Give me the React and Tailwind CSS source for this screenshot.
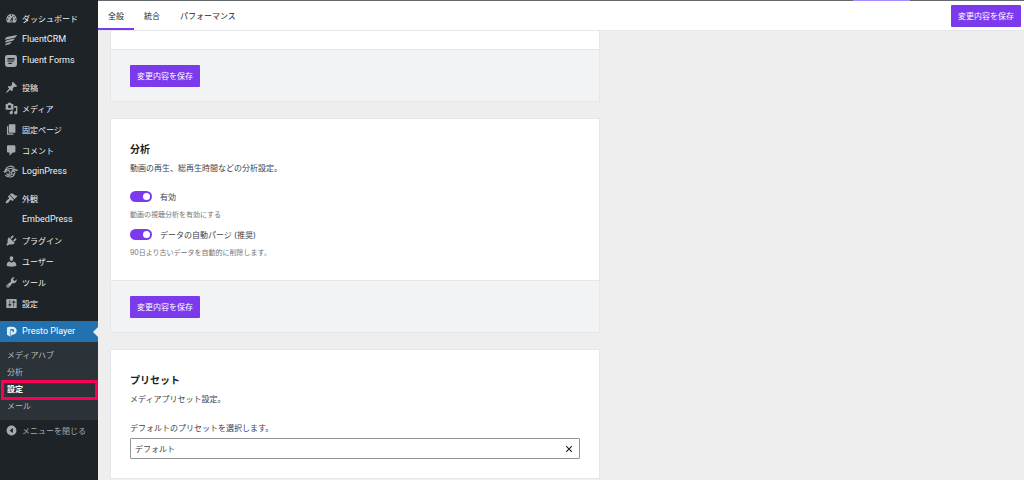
import React, { useState } from "react";

const paths = {
  dashboard:
    "M3.76 16h12.48A7.998 7.998 0 0 0 10 3a7.998 7.998 0 0 0-6.24 13zM10 4c.55 0 1 .45 1 1s-.45 1-1 1-1-.45-1-1 .45-1 1-1zM6 6c.55 0 1 .45 1 1s-.45 1-1 1-1-.45-1-1 .45-1 1-1zm8 0c.55 0 1 .45 1 1s-.45 1-1 1-1-.45-1-1 .45-1 1-1zm-5.37 5.55L12 7v6c0 1.1-.9 2-2 2s-2-.9-2-2c0-.57.24-1.08.63-1.45zM4 10c.55 0 1 .45 1 1s-.45 1-1 1-1-.45-1-1 .45-1 1-1zm12 0c.55 0 1 .45 1 1s-.45 1-1 1-1-.45-1-1 .45-1 1-1zm-5 3c0-.55-.45-1-1-1s-1 .45-1 1 .45 1 1 1 1-.45 1-1z",
  crm: "M0 8.500C1 5.500 3.500 4.500 7 4L20 1.500C19 5 16.500 6.200 14 6.700L4 8.600C2.500 8.800 1 9 0 9.500zM0 14C1 11 3 10 6 9.400L16 7.400C15 10.600 12.500 11.600 10 12L4 13.200C2.500 13.400 1 13.700 0 14.500zM0 19C1 16 3 15 5 14.600L11 13.400C10 16.200 8 17 6 17.400C4 17.800 2 18 0 19z",
  forms:
    "M4 0h12a4 4 0 0 1 4 4v12a4 4 0 0 1-4 4H4a4 4 0 0 1-4-4V4a4 4 0 0 1 4-4zM4 5v2.500h12V5zM4 9v2h10.500l1.500-2zM5.500 13v2h5.500l1.500-2z",
  post: "M10.44 3.02l1.82-1.82 6.36 6.35-1.83 1.82c-1.05-.68-2.48-.57-3.41.36l-.75.75c-.92.93-1.04 2.35-.35 3.41l-1.83 1.82-2.41-2.41-2.8 2.79c-.42.42-3.38 2.71-3.8 2.29s1.86-3.39 2.28-3.81l2.79-2.79L4.1 9.36l1.83-1.82c1.05.69 2.48.57 3.4-.36l.75-.75c.93-.92 1.05-2.35.36-3.41z",
  media:
    "M13 11V4c0-.55-.45-1-1-1h-1.670L9 1H5L3.670 3H2c-.55 0-1 .45-1 1v7c0 .55.45 1 1 1h10c.55 0 1-.45 1-1zM7 4.500c1.380 0 2.500 1.120 2.500 2.500S8.380 9.500 7 9.500 4.500 8.380 4.500 7 5.620 4.500 7 4.500zM14 6h5v10.500c0 1.380-1.120 2.500-2.500 2.500S14 17.880 14 16.500s1.120-2.500 2.500-2.500c.17 0 .34.02.5.05V9h-3V6zm-4 8.050V13h2v3.500c0 1.380-1.120 2.500-2.500 2.500S7 17.880 7 16.500 8.120 14 9.500 14c.17 0 .34.02.5.05z",
  page: "M6 15V2h10v13H6zm-1 1h8v2H3V5h2v11z",
  comment:
    "M5 2h9c1.1 0 2 .9 2 2v7c0 1.1-.9 2-2 2h-2l-5 5v-5H5c-1.1 0-2-.9-2-2V4c0-1.1.9-2 2-2z",
  appearance:
    "M14.48 11.06L7.41 3.99l1.5-1.5c.5-.56 2.3-.47 3.51.32 1.21.8 1.43 1.28 2.91 2.1 1.18.64 2.45 1.26 4.45.85zm-.71.71L6.7 4.7 4.93 6.47c-.39.39-.39 1.02 0 1.41l1.06 1.06c.39.39.39 1.03 0 1.42-.6.6-1.43 1.11-2.21 1.69-.35.26-.7.53-1.01.84C1.43 14.23.4 16.08 1.4 17.07c.99 1 2.84-.03 4.18-1.36.31-.31.58-.66.85-1.02.57-.78 1.08-1.61 1.69-2.21.39-.39 1.02-.39 1.41 0l1.06 1.06c.39.39 1.02.39 1.41 0z",
  plugins:
    "M13.11 4.36L9.87 7.6 8 5.73l3.24-3.24c.35-.34 1.05-.2 1.56.32.52.51.66 1.21.31 1.55zm-8 1.77l.91-1.12 9.01 9.01-1.19.84c-.71.71-2.63 1.16-3.82 1.16H6.14L4.9 17.26c-.59.59-1.54.59-2.12 0-.59-.58-.59-1.53 0-2.12L4 13.88v-3.850c0-1.180.4-3.190 1.110-3.900zm7.260 3.970l3.240-3.240c.34-.35 1.040-.21 1.550.31.52.51.66 1.210.31 1.550l-3.240 3.250z",
  users:
    "M10 9.25c-2.27 0-2.73-3.44-2.73-3.44C7 4.02 7.82 2 9.97 2c2.16 0 2.98 2.02 2.71 3.81 0 0-.41 3.44-2.68 3.44zm0 2.57L12.72 10c2.39 0 4.52 2.33 4.52 4.53v2.49s-3.65 1.13-7.24 1.13c-3.65 0-7.24-1.13-7.24-1.13v-2.49c0-2.25 1.94-4.48 4.47-4.48z",
  tools:
    "M16.68 9.77c-1.34 1.34-3.3 1.67-4.95.99l-5.41 6.52c-.99.99-2.59.99-3.58 0s-.99-2.59 0-3.57l6.52-5.42c-.68-1.65-.35-3.61.99-4.95 1.28-1.28 3.12-1.62 4.72-1.06l-2.89 2.89 2.82 2.82 2.86-2.87c.53 1.58.18 3.39-1.08 4.65zM3.81 16.21c.4.39 1.04.39 1.43 0 .4-.4.4-1.04 0-1.43-.39-.4-1.03-.4-1.43 0-.39.39-.39 1.03 0 1.43z",
  settings:
    "M18 16V4c0-.55-.45-1-1-1H3c-.55 0-1 .45-1 1v12c0 .55.45 1 1 1h14c.55 0 1-.45 1-1zM8 11h1c.55 0 1 .45 1 1s-.45 1-1 1H8v1.5c0 .28-.22.5-.5.5s-.5-.22-.5-.5V13H6c-.55 0-1-.45-1-1s.45-1 1-1h1V5.5c0-.28.22-.5.5-.5s.5.22.5.5V11zm5-2h-1c-.55 0-1-.45-1-1s.45-1 1-1h1V5.5c0-.28.22-.5.5-.5s.5.22.5.5V7h1c.55 0 1 .45 1 1s-.45 1-1 1h-1v5.5c0 .28-.22.5-.5.5s-.5-.22-.5-.5V9z",
  presto:
    "M3 4C5 2.500 8 2.500 11 2.500C15.500 2.500 18 5.500 18 9C18 12.500 15.500 15 12 15H10.500L8.500 18.500V7.500L12.500 9.500L10.500 11.500C12.500 11.500 14 11 14 9C14 7 12.500 6.200 11 6.200C8.500 6.200 7.500 7 7.500 9V17.500L3 15z",
  collapse:
    "M10 1a9 9 0 1 0 0 18 9 9 0 0 0 0-18zM12.500 5.500v9L6.500 10z",
};

function Icon({ name }) {
  if (name === "login") {
    return (
      <svg viewBox="0 0 24 20" className="h-[13px] w-4 shrink-0" fill="none" stroke="currentColor" strokeWidth="1.6" aria-hidden="true">
        <path d="M3 7.500C6 1 14 0 17 4.500M1 10.500C6 5 14 4 22.500 8.500C18 7 14 7.500 12.500 10M2 12C5 7.500 10 8 10.500 11C11 14.500 6.500 15.500 5 13M3 15.500C7 19.500 15 19.500 17.500 14.500M12.500 11.500C14 8.500 18.500 9 18 12C17.500 15 12.500 15.500 12.500 11.500M6 17C10 16.500 11 15 13 14.500" />
      </svg>
    );
  }
  const large = name === "crm" || name === "forms";
  return (
    <svg viewBox="0 0 20 20" className={large ? "size-3 shrink-0" : "size-[13px] shrink-0"} fill="currentColor" fillRule="evenodd" aria-hidden="true">
      {name && <path d={paths[name]} />}
    </svg>
  );
}

const groups = [
  [
    ["dashboard", "ダッシュボード"],
    ["crm", "FluentCRM"],
    ["forms", "Fluent Forms"],
  ],
  [
    ["post", "投稿"],
    ["media", "メディア"],
    ["page", "固定ページ"],
    ["comment", "コメント"],
    ["login", "LoginPress"],
  ],
  [
    ["appearance", "外観"],
    ["", "EmbedPress"],
    ["plugins", "プラグイン"],
    ["users", "ユーザー"],
    ["tools", "ツール"],
    ["settings", "設定"],
  ],
];

function MenuLink({ icon, label }) {
  const latin = /^[A-Z]/.test(label);
  return (
    <a href="#" className="flex h-[21px] items-center text-[#f0f0f1]">
      <span className="flex w-[22px] shrink-0 justify-center text-[#a7aaad]">
        <Icon name={icon} />
      </span>
      <span className={latin ? "whitespace-nowrap font-[Roboto,sans-serif] text-[9px]" : "whitespace-nowrap text-[8px]"}>{label}</span>
    </a>
  );
}

function Sidebar() {
  return (
    <nav className="flex w-[98px] shrink-0 flex-col bg-[#1d2327] pt-2">
      <div className="flex flex-col gap-[6px]">
        {groups.map((items, i) => (
          <div key={i}>
            {items.map(([icon, label]) => (
              <MenuLink key={label} icon={icon} label={label} />
            ))}
          </div>
        ))}
      </div>
      <a href="#" className="relative mt-[7px] flex h-[21px] items-center bg-[#2271b1] font-[Roboto,sans-serif] text-[9px] text-white">
        <span className="flex w-[22px] justify-center text-[#e4edf5]">
          <Icon name="presto" />
        </span>
        Presto Player
        <span className="absolute right-0 top-1/2 size-0 -translate-y-1/2 border-y-5 border-r-5 border-y-transparent border-r-[#eeeeee]" />
      </a>
      <div className="flex flex-col bg-[#2c3338] pb-[6px] pt-1 text-[8px] text-[#b8bbbe]">
        <a href="#" className="flex h-[17px] items-center px-[7px]">メディアハブ</a>
        <a href="#" className="flex h-[17px] items-center px-[7px]">分析</a>
        <a href="#" aria-current="page" className="relative flex h-[17px] items-center px-[7px] font-bold text-white">
          設定
          <span className="absolute -bottom-[3px] left-px right-0 top-0 border-3 border-[#fb0054]" />
        </a>
        <a href="#" className="flex h-[17px] items-center px-[7px]">メール</a>
      </div>
      <button type="button" className="flex h-[21px] items-center text-[8px] text-[#a7aaad]">
        <span className="flex w-[22px] justify-center">
          <svg viewBox="0 0 20 20" className="size-[11px]" fill="currentColor" fillRule="evenodd" aria-hidden="true">
            <path d={paths.collapse} />
          </svg>
        </span>
        メニューを閉じる
      </button>
    </nav>
  );
}

function SaveButton() {
  return (
    <button type="button" className="h-[22px] whitespace-nowrap rounded-[1px] bg-[#7c3aed] px-[7px] text-[8px] text-white">
      変更内容を保存
    </button>
  );
}

function Toggle({ id, label, help }) {
  const [on, setOn] = useState(true);
  return (
    <div>
      <div className="flex h-[19px] items-center gap-2">
        <span className="relative flex items-center">
          <input
            id={id}
            type="checkbox"
            role="switch"
            checked={on}
            onChange={() => setOn(!on)}
            className="peer h-[11px] w-[22px] appearance-none rounded-full bg-[#8c8f94] checked:bg-[#7c3aed]"
          />
          <span className="pointer-events-none absolute left-[2px] size-[7px] rounded-full bg-white peer-checked:left-[13px]" />
        </span>
        <label htmlFor={id}>{label}</label>
      </div>
      <p className="flex h-[19px] items-center text-[7px] text-[#757575]">{help}</p>
    </div>
  );
}

function CardFooter() {
  return (
    <div className="flex h-[52px] items-center border-t border-[#e5e7eb] bg-[#f2f3f5] px-[19px]">
      <SaveButton />
    </div>
  );
}

function CardHeading({ title, text }) {
  return (
    <header className="mb-[10px]">
      <h2 className="text-[10px] font-bold leading-[20px] text-[#1e1e1e]">{title}</h2>
      <p className="leading-[18px]">{text}</p>
    </header>
  );
}

const cardClass = "shrink-0 border border-[#e5e7eb] bg-white";

export default function App() {
  const [tab, setTab] = useState("全般");
  const [preset, setPreset] = useState("デフォルト");
  return (
    <div className="flex h-screen overflow-hidden bg-[#eeeeee] font-[Inter,'Noto_Sans_CJK_JP',sans-serif] text-[8px] text-[#3c434a]">
      <Sidebar />
      <div className="flex min-w-0 flex-1 flex-col">
        <div className="flex h-px shrink-0 justify-end bg-[#646970] pr-[114px]">
          <div className="w-[57px] bg-[#a78bfa]" />
        </div>
        <header className="flex h-[30px] shrink-0 items-center justify-between border-b border-[#e5e7eb] bg-white pr-[3px]">
          <div role="tablist" className="flex h-full">
            {["全般", "統合", "パフォーマンス"].map((name) => (
              <button
                key={name}
                type="button"
                role="tab"
                aria-selected={tab === name}
                onClick={() => setTab(name)}
                className="border-b-2 border-transparent px-[10px] pt-[2px] text-[#1e1e1e] aria-selected:border-[#7c3aed]"
              >
                {name}
              </button>
            ))}
          </div>
          <SaveButton />
        </header>
        <main className="flex min-h-0 flex-1 flex-col overflow-hidden pl-3 pr-6">
          <div className="flex w-full max-w-[490px] flex-col gap-4">
            <section className={`${cardClass} border-t-0 pt-[18px]`}>
              <CardFooter />
            </section>
            <section className={cardClass}>
              <div className="px-[19px] pb-[17px] pt-5">
                <CardHeading title="分析" text="動画の再生、総再生時間などの分析設定。" />
                <Toggle id="analytics" label="有効" help="動画の視聴分析を有効にする" />
                <Toggle id="purge" label="データの自動パージ (推奨)" help="90日より古いデータを自動的に削除します。" />
              </div>
              <CardFooter />
            </section>
            <section className={cardClass}>
              <div className="px-[19px] pb-[19px] pt-5">
                <CardHeading title="プリセット" text="メディアプリセット設定。" />
                <label htmlFor="preset" className="flex h-5 items-center">
                  デフォルトのプリセットを選択します。
                </label>
                <div className="flex h-[21px] items-center rounded-[1px] border border-[#949494] px-1">
                  <input
                    id="preset"
                    value={preset}
                    onChange={(e) => setPreset(e.target.value)}
                    className="min-w-0 flex-1 text-[8px] outline-none"
                  />
                  <button type="button" aria-label="クリア" onClick={() => setPreset("")} className="flex size-3 items-center justify-center">
                    <svg viewBox="0 0 8 8" className="size-2" fill="none" stroke="#1e1e1e" strokeWidth="1.1" aria-hidden="true">
                      <path d="M1.200 1.200l5.600 5.600M6.800 1.200L1.200 6.800" />
                    </svg>
                  </button>
                </div>
              </div>
            </section>
          </div>
        </main>
      </div>
    </div>
  );
}
